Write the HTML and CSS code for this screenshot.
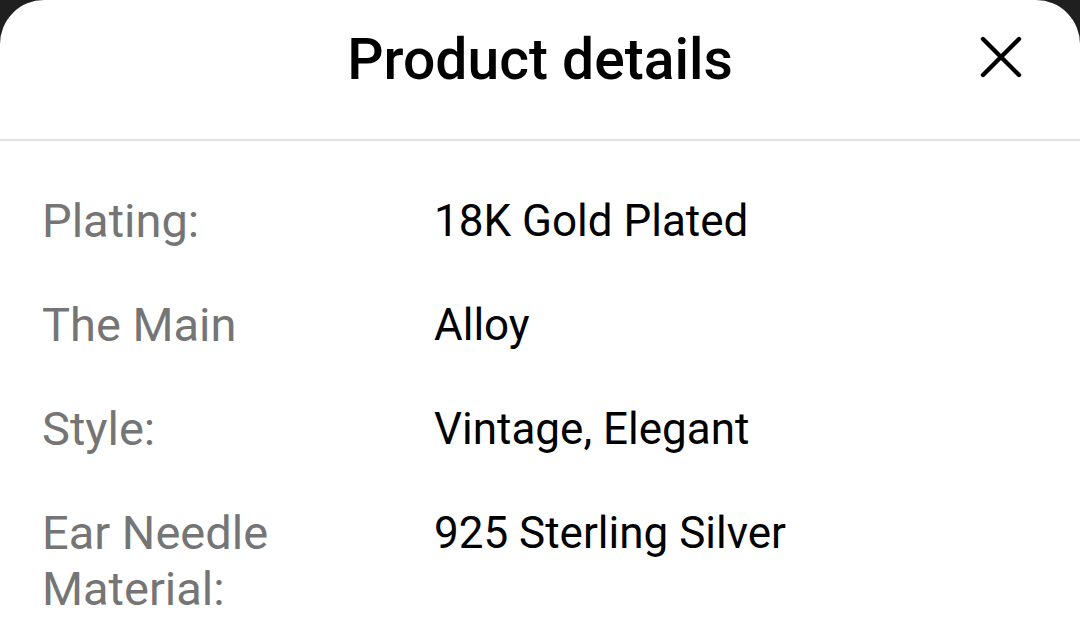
FILE: index.html
```html
<!DOCTYPE html>
<html>
<head>
<meta charset="utf-8">
<link rel="stylesheet" href="styles.css">
</head>
<body>
<div class="sheet">
  <header class="header">
    <h1 class="title">Product details</h1>
    <button class="close" aria-label="Close">
      <svg width="44" height="44" viewBox="0 0 44 44"><path d="M4 4 L40 40 M40 4 L4 40" stroke="#000" stroke-width="4.4" stroke-linecap="round" fill="none"/></svg>
    </button>
  </header>
  <div class="rows">
    <div class="row"><div class="label">Plating:</div><div class="value">18K Gold Plated</div></div>
    <div class="row"><div class="label">The Main</div><div class="value">Alloy</div></div>
    <div class="row"><div class="label">Style:</div><div class="value">Vintage, Elegant</div></div>
    <div class="row"><div class="label">Ear Needle Material:</div><div class="value">925 Sterling Silver</div></div>
  </div>
</div>
</body>
</html>
```
FILE: styles.css
```css
html, body { margin: 0; padding: 0; }
body {
  background: #1f1f1f;
  font-family: Roboto, "Liberation Sans", sans-serif;
  width: 1080px;
  height: 622px;
  overflow: hidden;
}
.sheet {
  background: #fff;
  border-radius: 44px 44px 0 0;
  height: 622px;
}
.header {
  height: 139px;
  border-bottom: 2px solid #e2e2e2;
  display: flex;
  align-items: center;
  justify-content: center;
  position: relative;
}
.title {
  margin: 0;
  font-size: 57px;
  font-weight: 500;
  color: #000;
  margin-top: -20px;
}
.close {
  position: absolute;
  right: 57px;
  top: 35px;
  border: 0;
  background: none;
  padding: 0;
  width: 44px;
  height: 44px;
}
.close svg { display: block; }
.rows {
  padding: 52px 0 0 42px;
}
.row {
  display: grid;
  grid-template-columns: 392px 1fr;
  margin-bottom: 48px;
  line-height: 56px;
}
.label { color: #757575; width: 270px; font-size: 47px; }
.value { color: #000; font-size: 44px; }
```
